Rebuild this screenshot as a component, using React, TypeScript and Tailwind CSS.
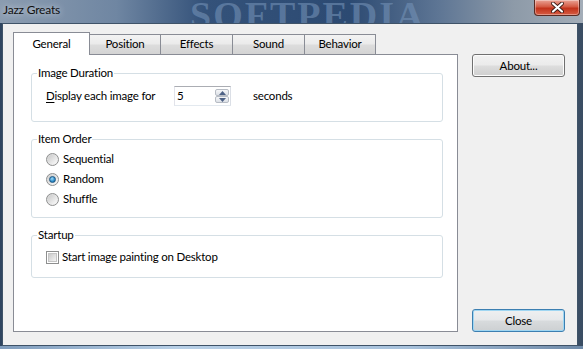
import React from 'react';

// Win7-styled "Jazz Greats" settings dialog, General tab

const FONT = { fontFamily: 'Lato, "Noto Sans", Arial, sans-serif' };

const TABS = [
  { label: 'General', w: 'w-[77px]' },
  { label: 'Position', w: 'w-[71px]' },
  { label: 'Effects', w: 'w-[72px]' },
  { label: 'Sound', w: 'w-[72px]' },
  { label: 'Behavior', w: 'w-[71px]' },
];

function Radio({ label, checked }: { label: string; checked?: boolean }) {
  return (
    <div className="flex h-[16px] items-center gap-[4px]">
      <span className="flex h-[13px] w-[13px] items-center justify-center rounded-full border border-[#8e8f8f] bg-[linear-gradient(135deg,#d4d4d4,#f6f6f6)]">
        <span className="flex h-[9px] w-[9px] items-center justify-center rounded-full bg-[linear-gradient(135deg,#c9c9c9,#fbfbfb)]">
          {checked && (
            <span className="h-[7px] w-[7px] rounded-full border border-[#1e5783] bg-[radial-gradient(circle_at_40%_35%,#9fd9f7,#2a8ac8_60%,#145487)]" />
          )}
        </span>
      </span>
      <span className="whitespace-nowrap">{label}</span>
    </div>
  );
}

function Group({ title, className, children }: { title: string; className: string; children: React.ReactNode }) {
  return (
    <fieldset className={`rounded-[3px] border border-[#d5dfe5] ${className}`}>
      <legend className="ml-[5px] px-[1px] leading-[16px]">{title}</legend>
      {children}
    </fieldset>
  );
}

function Arrow({ up }: { up?: boolean }) {
  return (
    <span className="flex h-[7px] w-[14px] items-center justify-center rounded-[2px] border border-[#b7bcc4] bg-[linear-gradient(#f5f6f8,#dde1e7)]">
      <svg width="7" height="4" viewBox="0 0 7 4">
        <path d={up ? 'M0 4 L3.5 0 L7 4 Z' : 'M0 0 L3.5 4 L7 0 Z'} fill="#4d6185" />
      </svg>
    </span>
  );
}

export default function App() {
  return (
    <div
      className="relative flex h-[349px] w-[583px] flex-col overflow-hidden bg-[linear-gradient(90deg,#2f4560,#4d6a8d_40%,#536f8f_80%,#3a4d63)] text-[11.5px] tracking-[-0.2px] text-black"
      style={FONT}
    >
      {/* title bar */}
      <div className="relative flex h-[23px] shrink-0 items-start justify-between overflow-hidden bg-[linear-gradient(90deg,#8b9cb0,#6f86a2_20%,#34527a_35%,#2c4a72_60%,#5d7594_75%,#8d9aa8_88%,#a3adb8)]">
        <span
          className="pointer-events-none absolute left-[190px] top-[-13px] whitespace-nowrap text-[38px] font-bold tracking-[2px] text-[#7391b6]/60"
          style={{ fontFamily: '"Liberation Serif", "DejaVu Serif", serif' }}
        >
          SOFTPEDIA
        </span>
        <span className="relative ml-[3px] mt-[2px] text-[12px] leading-[16px] text-[#101010] [text-shadow:0_0_6px_#dfe6ee]">
          Jazz Greats
        </span>
        <button className="relative mr-[3px] flex h-[16px] w-[46px] items-center justify-center rounded-b-[4px] border border-t-0 border-[#5a2a22] bg-[linear-gradient(#eaa395,#d45a43_45%,#c2321a_55%,#d65d44)] shadow-[inset_0_0_0_1px_rgba(255,255,255,0.35)]">
          <svg width="13" height="11" viewBox="0 0 13 11">
            <path d="M2 1.5 L11 9.5 M11 1.5 L2 9.5" stroke="#3b1a14" strokeWidth="3.8" strokeLinecap="round" />
            <path d="M2 1.5 L11 9.5 M11 1.5 L2 9.5" stroke="#ffffff" strokeWidth="2.2" strokeLinecap="round" />
          </svg>
        </button>
      </div>

      {/* client area */}
      <div className="ml-[2px] flex h-[323px] w-[576px] shrink-0 border border-[#3f5368] bg-[#f0f0f0] pt-[8px]">
        {/* tab control */}
        <div className="ml-[10px] flex w-[445px] flex-col">
          <div className="flex h-[22px] items-end">
            {TABS.map((t, i) =>
              i === 0 ? (
                <div
                  key={t.label}
                  className={`${t.w} relative z-10 mb-[-1px] flex h-[23px] items-start justify-center border border-b-0 border-[#898c95] bg-white pt-[3px] leading-[16px]`}
                >
                  {t.label}
                </div>
              ) : (
                <div
                  key={t.label}
                  className={`${t.w} flex h-[20px] items-center justify-center border border-l-0 border-b-0 border-[#898c95] bg-[linear-gradient(#f3f3f3,#ebebeb_45%,#dcdcdc_55%,#d4d4d4)] pb-[1px] leading-[16px]`}
                >
                  {t.label}
                </div>
              )
            )}
          </div>
          <div className="flex h-[278px] flex-col border border-[#898c95] bg-white pl-[17px] pr-[14px]">
            <Group title="Image Duration" className="mt-[10px] h-[57px]">
              <div className="mt-[5px] flex h-[20px] items-center pl-[14px]">
                <span className="w-[128px] whitespace-nowrap">
                  <span className="underline decoration-1 underline-offset-2">D</span>isplay each image for
                </span>
                <div className="flex h-[20px] w-[57px] items-center justify-between border border-[#abadb3] border-b-[#e3e9ef] border-l-[#e2e3ea] border-r-[#dbdfe6] bg-white pl-[2px] pr-[1px]">
                  <span className="leading-[16px]">5</span>
                  <span className="flex flex-col">
                    <Arrow up />
                    <Arrow />
                  </span>
                </div>
                <span className="ml-[22px]">seconds</span>
              </div>
            </Group>

            <Group title="Item Order" className="mt-[9px] h-[87px]">
              <div className="mt-[4px] flex flex-col gap-[4px] pl-[14px]">
                <Radio label="Sequential" />
                <Radio label="Random" checked />
                <Radio label="Shuffle" />
              </div>
            </Group>

            <Group title="Startup" className="mt-[9px] h-[51px]">
              <div className="mt-[6px] flex h-[16px] items-center gap-[3px] pl-[14px]">
                <span className="flex h-[13px] w-[13px] items-center justify-center border border-[#8e8f8f] bg-white">
                  <span className="h-[9px] w-[9px] border border-[#c5c5c5] bg-[linear-gradient(135deg,#cbcbcb,#f4f4f4)]" />
                </span>
                <span className="whitespace-nowrap">Start image painting on Desktop</span>
              </div>
            </Group>
          </div>
        </div>

        {/* side buttons */}
        <div className="ml-[14px] mt-[22px] flex h-[278px] w-[93px] flex-col justify-between">
          <button className="h-[23px] w-[93px] rounded-[3px] border border-[#707070] bg-[linear-gradient(#f2f2f2,#ebebeb_48%,#dddddd_52%,#cfcfcf)] leading-[16px] shadow-[inset_0_0_0_1px_#fcfcfc]">
            About...
          </button>
          <button className="h-[23px] w-[93px] rounded-[3px] border border-[#3c7fb1] bg-[linear-gradient(#eef0f1,#e6e8ea_48%,#d8dbdd_52%,#cdd0d2)] leading-[16px] shadow-[inset_0_0_0_1px_#9fd6f2]">
            Close
          </button>
        </div>
      </div>

      {/* bottom frame */}
      <div className="flex-1 bg-[linear-gradient(90deg,#7f9cbc,#b7cfe6_30%,#a8c2dc_70%,#6f8aa8)]" />
    </div>
  );
}
